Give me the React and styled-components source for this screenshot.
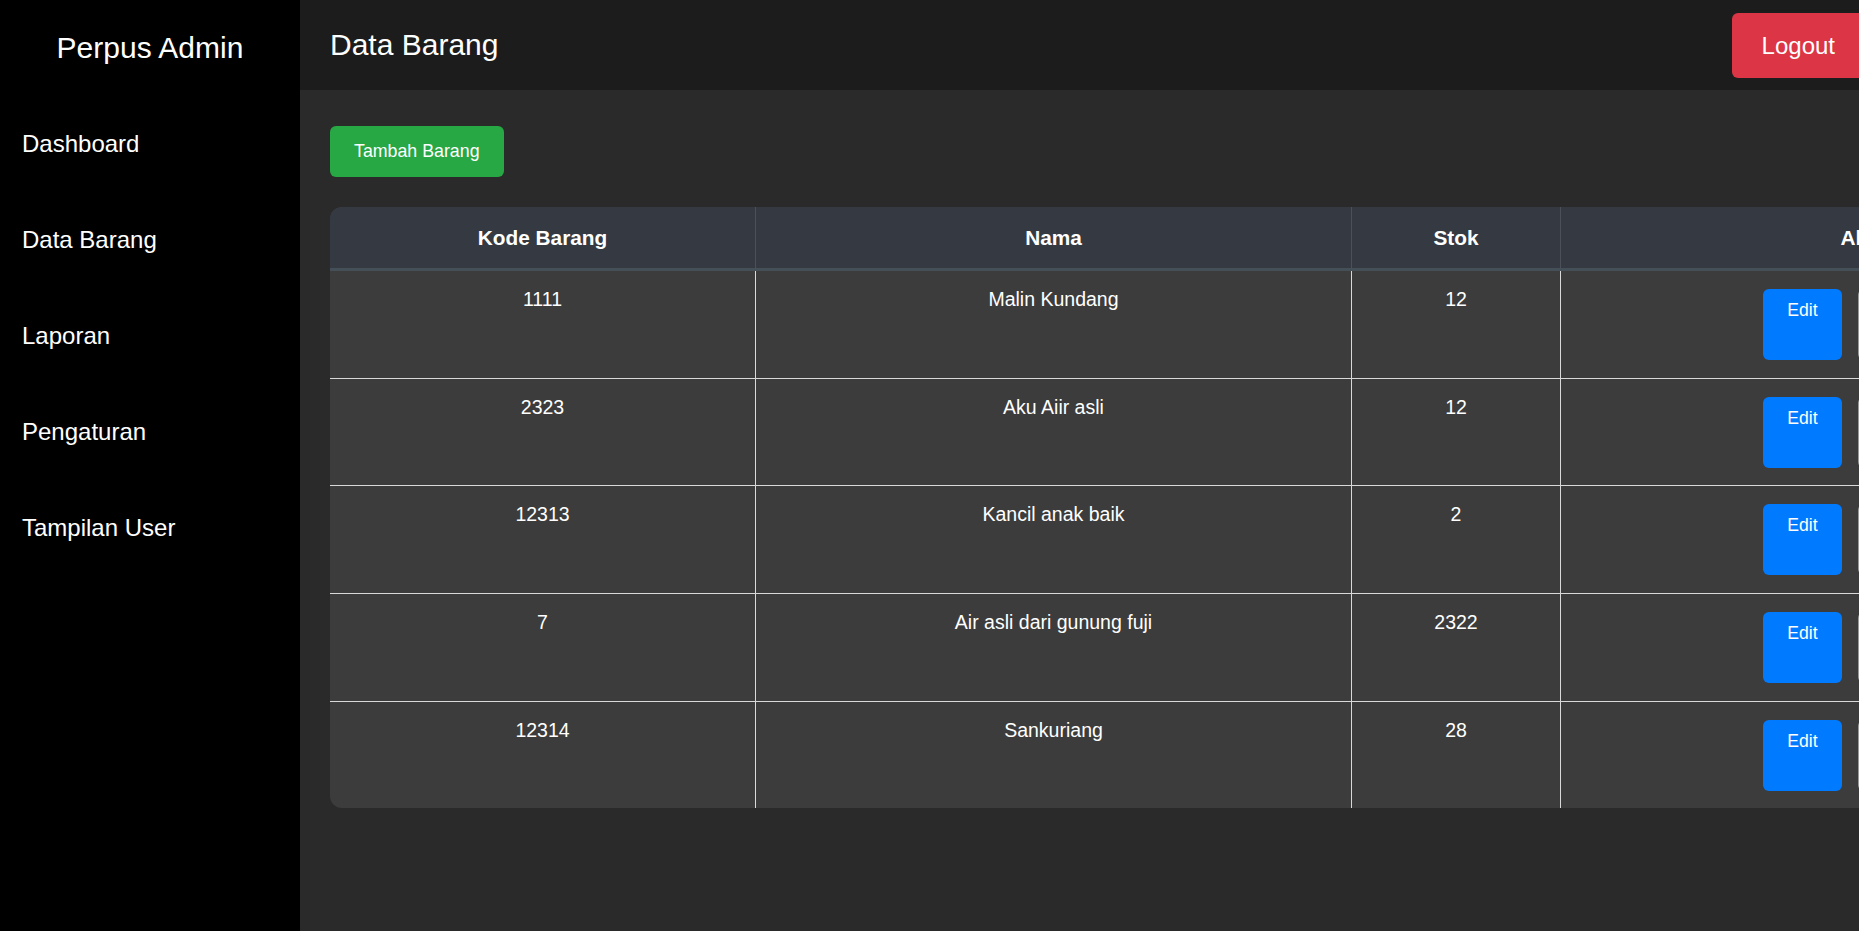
import React from "react";
import styled, { createGlobalStyle } from "styled-components";

const GlobalStyle = createGlobalStyle`
  html, body {
    margin: 0;
    padding: 0;
    overflow: hidden;
    background: #2a2a2a;
    font-family: "Liberation Sans", Arial, Helvetica, sans-serif;
    color: #ffffff;
  }
  * { box-sizing: border-box; }
`;

const Shell = styled.div`
  display: flex;
  width: 100vw;
  height: 100vh;
  overflow: hidden;
`;

const Sidebar = styled.aside`
  flex: 0 0 300px;
  background: #000000;
  display: flex;
  flex-direction: column;
`;

const Brand = styled.h2`
  margin: 0;
  padding: 31px 0;
  font-size: 30px;
  font-weight: 400;
  line-height: 34px;
  text-align: center;
`;

const NavItem = styled.a`
  height: 96px;
  display: flex;
  align-items: center;
  padding-left: 22px;
  font-size: 24px;
  color: #ffffff;
  text-decoration: none;
`;

const Main = styled.main`
  flex: 0 0 1894px;
  display: flex;
  flex-direction: column;
  background: #2a2a2a;
`;

const HeaderBand = styled.div`
  background: #1c1c1c;
  display: flex;
`;

const Header = styled.header`
  width: 1565px;
  height: 90px;
  background: #1c1c1c;
  display: flex;
  align-items: center;
  justify-content: space-between;
  padding-left: 30px;
`;

const Title = styled.h1`
  margin: 0;
  font-size: 30px;
  font-weight: 400;
  line-height: 34px;
`;

const Button = styled.button`
  border: none;
  border-radius: 6px;
  color: #ffffff;
  font-family: inherit;
  cursor: pointer;
  background: ${(p) => p.$bg};
  font-size: ${(p) => p.$size || "17.8px"};
  padding: ${(p) => p.$pad};
  line-height: ${(p) => p.$lh || "21px"};
`;

const LogoutButton = styled(Button)`
  height: 65px;
  padding: 0 30px;
  font-size: 24px;
`;

const Content = styled.section`
  padding: 36px 30px 30px;
  display: flex;
  flex-direction: column;
  align-items: flex-start;
  gap: 30px;
`;

const Table = styled.table`
  width: 1834px;
  table-layout: fixed;
  border-collapse: separate;
  border-spacing: 0;
  border-radius: 12px;
  overflow: hidden;
  background: #3c3c3c;
`;

const Th = styled.th`
  background: #353a42;
  color: #ffffff;
  font-size: 20.8px;
  font-weight: 700;
  line-height: 25px;
  padding: 18px 10px;
  text-align: center;
  border-bottom: 3px solid #454f58;
  border-right: ${(p) => (p.$last ? "none" : "1px solid #4a5159")};
`;

const Td = styled.td`
  vertical-align: top;
  text-align: center;
  font-size: 19.5px;
  line-height: 20px;
  padding: 18px 10px 17.7px;
  color: #ffffff;
  border-right: ${(p) => (p.$last ? "none" : "1px solid #d9d9d9")};
  border-bottom: ${(p) => (p.$lastRow ? "none" : "1px solid #d9d9d9")};
`;

const Actions = styled.div`
  display: flex;
  justify-content: center;
  gap: 16px;
`;

const EditButton = styled.button`
  width: 79px;
  height: 71px;
  border: none;
  border-radius: 6px;
  background: #007bff;
  color: #ffffff;
  font-family: inherit;
  font-size: 17.6px;
  line-height: 20px;
  padding: 11px 0 0;
  display: flex;
  justify-content: center;
  align-items: flex-start;
`;

const DeleteButton = styled(EditButton)`
  width: 104px;
  background: #3c3c3c;
  border: 1px solid #9a9a9a;
`;

const rows = [
  { kode: "1111", nama: "Malin Kundang", stok: "12" },
  { kode: "2323", nama: "Aku Aiir asli", stok: "12" },
  { kode: "12313", nama: "Kancil anak baik", stok: "2" },
  { kode: "7", nama: "Air asli dari gunung fuji", stok: "2322" },
  { kode: "12314", nama: "Sankuriang", stok: "28" },
];

const navItems = ["Dashboard", "Data Barang", "Laporan", "Pengaturan", "Tampilan User"];

export default function App() {
  return (
    <>
      <GlobalStyle />
      <Shell>
        <Sidebar>
          <Brand>Perpus Admin</Brand>
          {navItems.map((n) => (
            <NavItem key={n} href="#">
              {n}
            </NavItem>
          ))}
        </Sidebar>
        <Main>
          <HeaderBand>
            <Header>
              <Title>Data Barang</Title>
              <LogoutButton $bg="#dc3545">Logout</LogoutButton>
            </Header>
          </HeaderBand>
          <Content>
            <Button $bg="#28a745" $pad="15px 24px">
              Tambah Barang
            </Button>
            <Table>
              <colgroup>
                <col style={{ width: 426 }} />
                <col style={{ width: 596 }} />
                <col style={{ width: 209 }} />
                <col style={{ width: 603 }} />
              </colgroup>
              <thead>
                <tr>
                  <Th>Kode Barang</Th>
                  <Th>Nama</Th>
                  <Th>Stok</Th>
                  <Th $last>Aksi</Th>
                </tr>
              </thead>
              <tbody>
                {rows.map((r, i) => {
                  const lastRow = i === rows.length - 1;
                  return (
                    <tr key={r.kode}>
                      <Td $lastRow={lastRow}>{r.kode}</Td>
                      <Td $lastRow={lastRow}>{r.nama}</Td>
                      <Td $lastRow={lastRow}>{r.stok}</Td>
                      <Td $lastRow={lastRow} $last>
                        <Actions>
                          <EditButton>Edit</EditButton>
                          <DeleteButton>Hapus</DeleteButton>
                        </Actions>
                      </Td>
                    </tr>
                  );
                })}
              </tbody>
            </Table>
          </Content>
        </Main>
      </Shell>
    </>
  );
}
